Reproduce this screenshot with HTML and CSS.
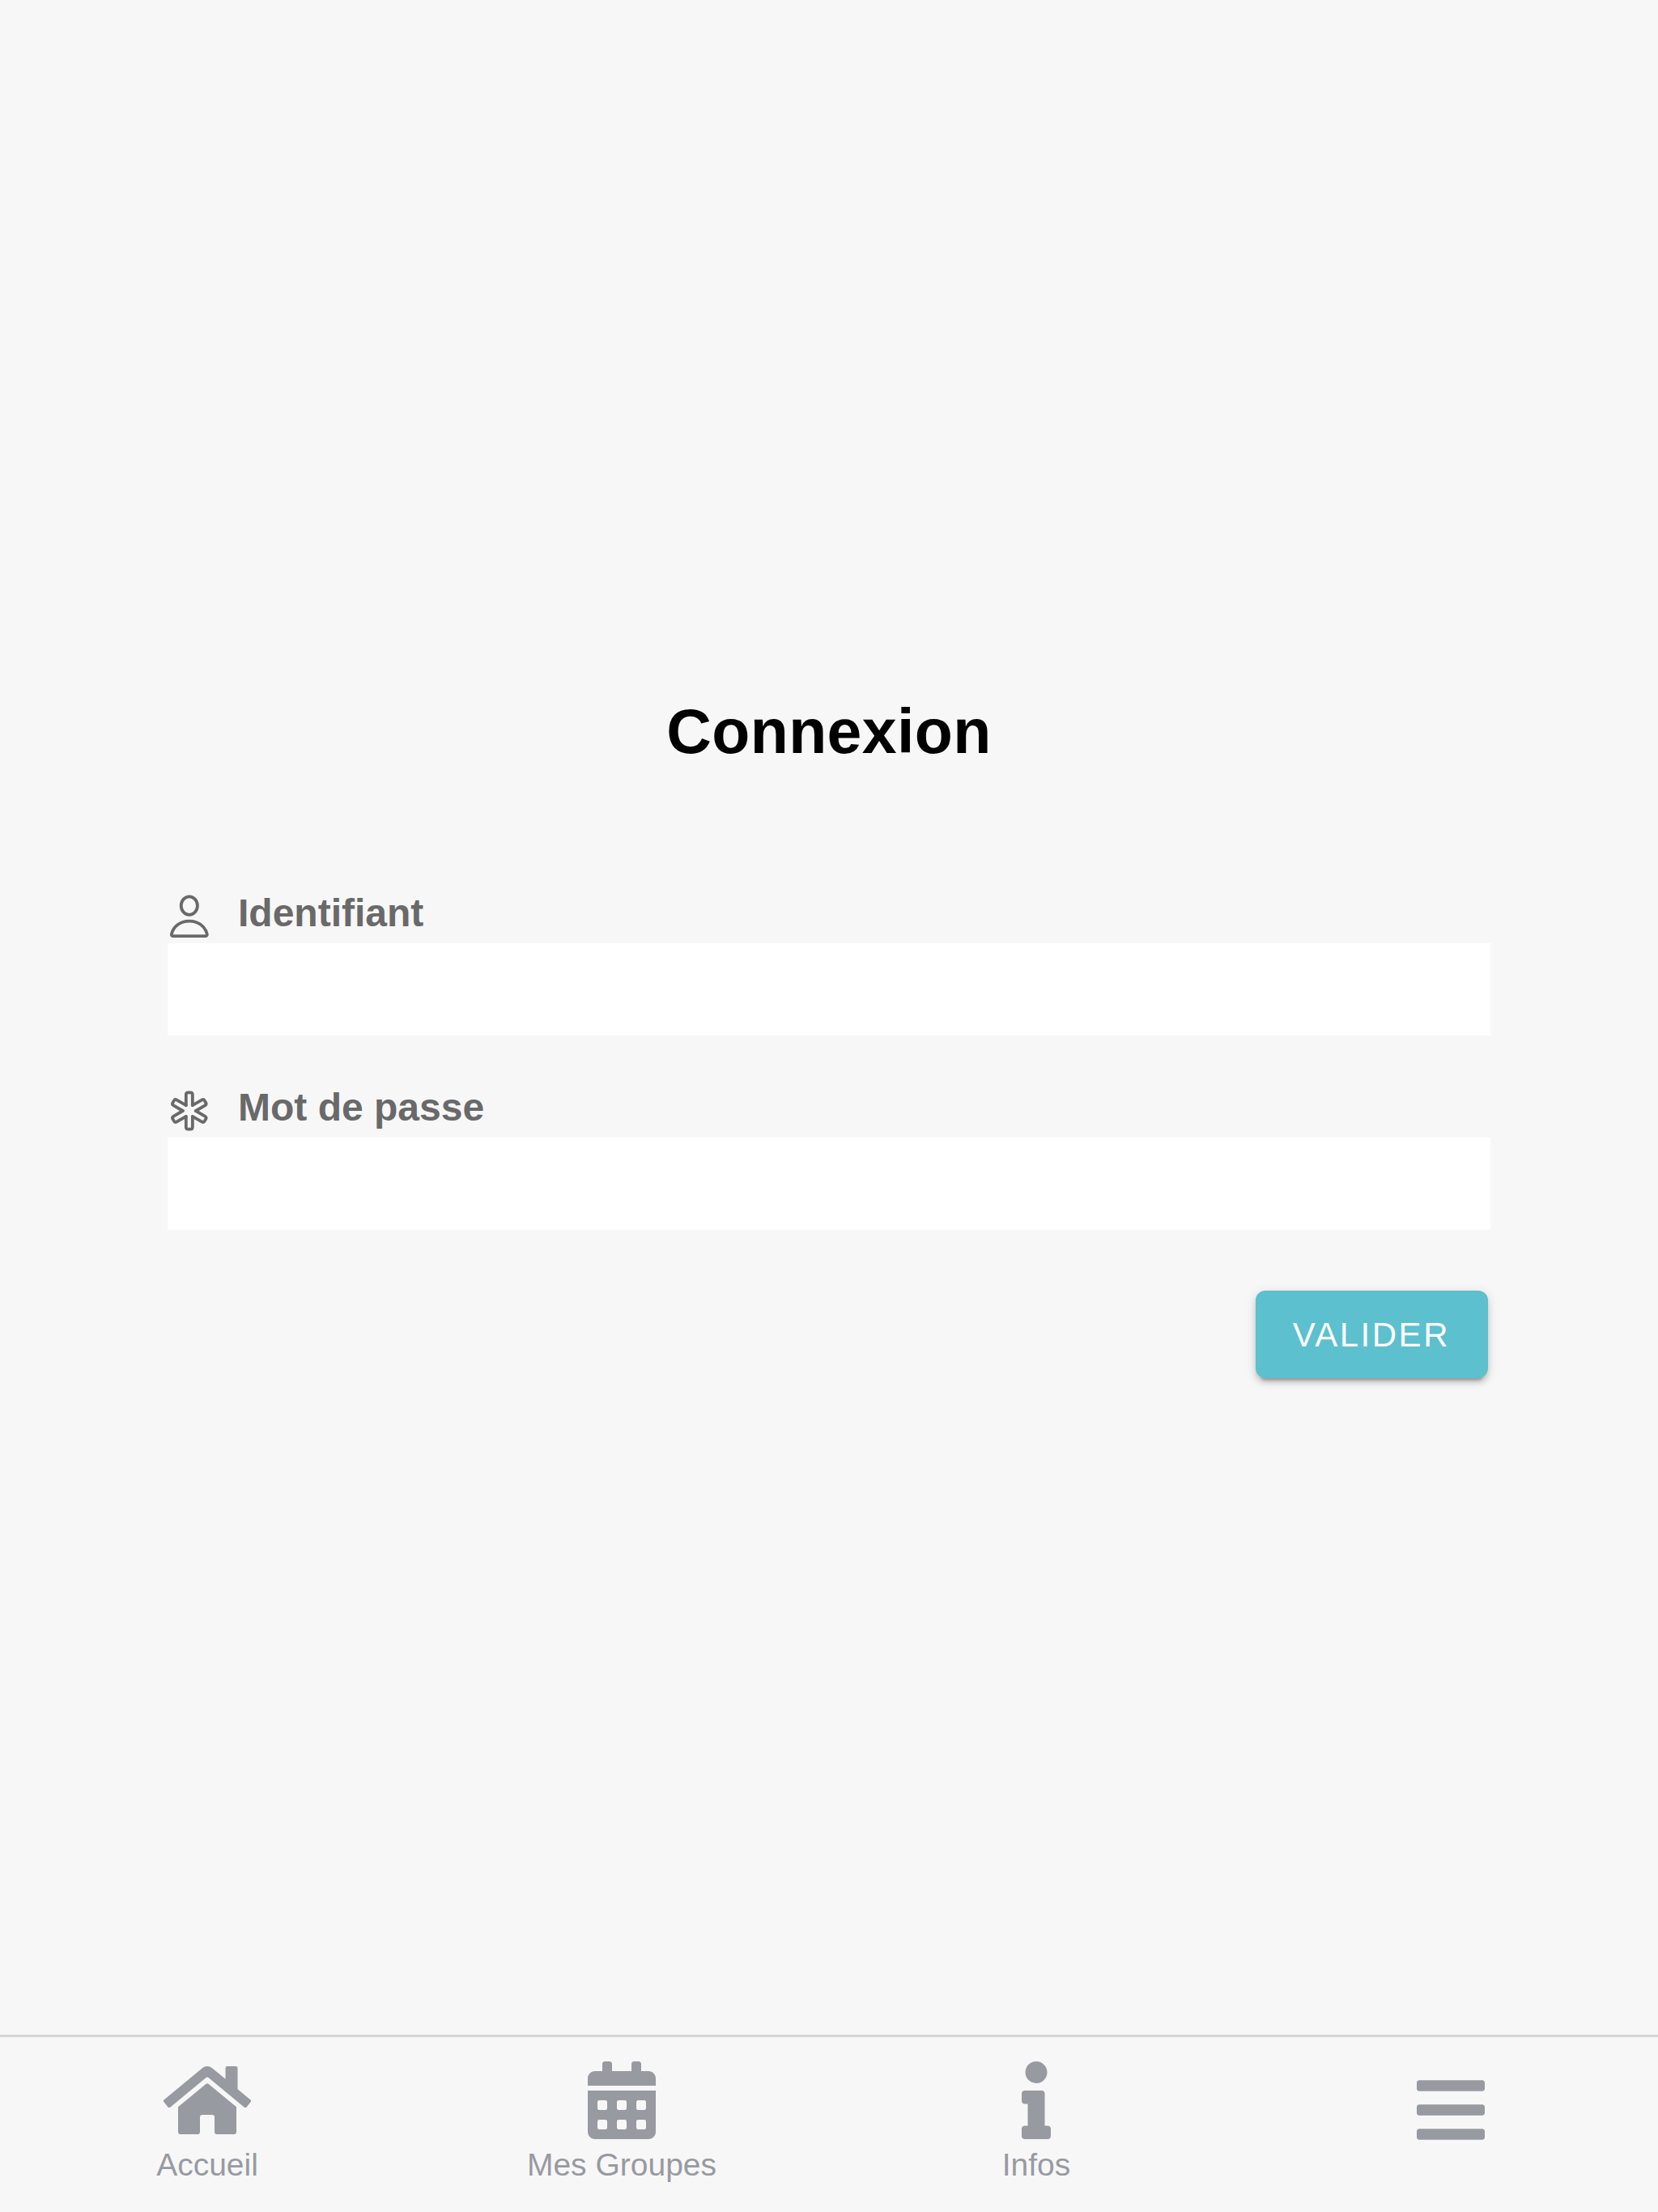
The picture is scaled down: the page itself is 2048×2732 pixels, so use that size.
FILE: index.html
```html
<!DOCTYPE html>
<html lang="fr">
  <head>
    <meta charset="utf-8" />
    <meta name="viewport" content="width=device-width, initial-scale=1" />
    <title>Connexion</title>

    <!-- CSS -->
    <link rel="stylesheet" href="styles.css">
  </head>

  <body>
    <main class="content">
      <h1 class="title">Connexion</h1>

      <form class="login-form">
        <div class="field">
          <label class="field-label" for="login">
            <svg class="field-icon" viewBox="0 0 60 60">
              <ellipse cx="29.8" cy="16.6" rx="10.1" ry="11.3" />
              <path d="M29.8 35.6C18.8 35.6 10.3 42 8 51.3C7.5 53.2 8.4 54.2 9.9 54.2H49.7C51.2 54.2 52.1 53.2 51.6 51.3C49.3 42 40.8 35.6 29.8 35.6Z" />
            </svg>
            Identifiant
          </label>
          <input class="field-input" id="login" type="text" />
        </div>

        <div class="field">
          <label class="field-label" for="password">
            <svg class="field-icon" viewBox="0 0 60 60">
              <!-- one branch of the star, turned six times -->
              <defs>
                <path id="branch" d="M-4 -6.93V-20Q-4 -22.7 -1.5 -22.7H1.5Q4 -22.7 4 -20V-6.93" />
              </defs>
              <g transform="translate(29.8 30)">
                <use href="#branch" />
                <use href="#branch" transform="rotate(60)" />
                <use href="#branch" transform="rotate(120)" />
                <use href="#branch" transform="rotate(180)" />
                <use href="#branch" transform="rotate(240)" />
                <use href="#branch" transform="rotate(300)" />
              </g>
            </svg>
            Mot de passe
          </label>
          <input class="field-input" id="password" type="password" />
        </div>

        <button class="submit-button" type="button">Valider</button>
      </form>
    </main>

    <!-- Bottom tabs -->
    <nav class="tab-bar">
      <a class="tab">
        <svg class="tab-icon" viewBox="0 0 576 512"><path d="M280.37 148.26L96 300.11V464a16 16 0 0 0 16 16l112.06-.29a16 16 0 0 0 15.92-16V368a16 16 0 0 1 16-16h64a16 16 0 0 1 16 16v95.64a16 16 0 0 0 16 16.05L464 480a16 16 0 0 0 16-16V300L295.67 148.26a12.19 12.19 0 0 0-15.3 0zM571.6 251.47L488 182.56V44.05a12 12 0 0 0-12-12h-56a12 12 0 0 0-12 12v72.61L318.47 43a48 48 0 0 0-61 0L4.34 251.47a12 12 0 0 0-1.6 16.9l25.5 31A12 12 0 0 0 45.15 301l235.22-193.74a12.19 12.19 0 0 1 15.3 0L530.9 301a12 12 0 0 0 16.9-1.6l25.5-31a12 12 0 0 0-1.7-16.93z" /></svg>
        <span>Accueil</span>
      </a>
      <a class="tab">
        <svg class="tab-icon" viewBox="0 0 448 512"><path fill-rule="evenodd" d="M0 464c0 26.5 21.5 48 48 48h352c26.5 0 48-21.5 48-48V192H0v272zM76 256h40a12 12 0 0 1 12 12v40a12 12 0 0 1-12 12H76a12 12 0 0 1-12-12v-40a12 12 0 0 1 12-12zM204 256h40a12 12 0 0 1 12 12v40a12 12 0 0 1-12 12h-40a12 12 0 0 1-12-12v-40a12 12 0 0 1 12-12zM332 256h40a12 12 0 0 1 12 12v40a12 12 0 0 1-12 12h-40a12 12 0 0 1-12-12v-40a12 12 0 0 1 12-12zM76 384h40a12 12 0 0 1 12 12v40a12 12 0 0 1-12 12H76a12 12 0 0 1-12-12v-40a12 12 0 0 1 12-12zM204 384h40a12 12 0 0 1 12 12v40a12 12 0 0 1-12 12h-40a12 12 0 0 1-12-12v-40a12 12 0 0 1 12-12zM332 384h40a12 12 0 0 1 12 12v40a12 12 0 0 1-12 12h-40a12 12 0 0 1-12-12v-40a12 12 0 0 1 12-12zM400 64h-48V16c0-8.8-7.2-16-16-16h-32c-8.8 0-16 7.2-16 16v48H160V16c0-8.8-7.2-16-16-16h-32c-8.8 0-16 7.2-16 16v48H48C21.5 64 0 85.5 0 112v48h448v-48c0-26.5-21.5-48-48-48z" /></svg>
        <span>Mes Groupes</span>
      </a>
      <a class="tab">
        <svg class="tab-icon" viewBox="0 0 192 512"><path d="M20 424.229h20V279.771H20c-11.046 0-20-8.954-20-20V212c0-11.046 8.954-20 20-20h112c11.046 0 20 8.954 20 20v212.229h20c11.046 0 20 8.954 20 20V492c0 11.046-8.954 20-20 20H20c-11.046 0-20-8.954-20-20v-47.771c0-11.046 8.954-20 20-20zM96 0C56.235 0 24 32.235 24 72s32.235 72 72 72 72-32.235 72-72S135.764 0 96 0z" /></svg>
        <span>Infos</span>
      </a>
      <a class="tab tab-menu">
        <svg class="tab-icon" viewBox="0 0 448 512"><path d="M16 132h416c8.837 0 16-7.163 16-16V76c0-8.837-7.163-16-16-16H16C7.163 60 0 67.163 0 76v40c0 8.837 7.163 16 16 16zm0 160h416c8.837 0 16-7.163 16-16v-40c0-8.837-7.163-16-16-16H16c-8.837 0-16 7.163-16 16v40c0 8.837 7.163 16 16 16zm0 160h416c8.837 0 16-7.163 16-16v-40c0-8.837-7.163-16-16-16H16c-8.837 0-16 7.163-16 16v40c0 8.837 7.163 16 16 16z" /></svg>
      </a>
    </nav>
  </body>
</html>
```
FILE: styles.css
```css
* {
  box-sizing: border-box;
}

body {
  display: flex;
  flex-direction: column;
  height: 100vh;
  margin: 0;
  font-family: "Liberation Sans", Arial, sans-serif;
  background-color: #f7f7f7;
  color: black;
}

.content {
  flex: 1;
  padding: 858px 207px 0;
}

.title {
  margin: 0 0 152px;
  font-size: 77px;
  line-height: 91px;
  letter-spacing: 0.4px;
  text-align: center;
}

.login-form {
  display: flex;
  flex-direction: column;
  padding-top: 1px;
}

.field {
  margin-bottom: 63px;
}

.field-label {
  display: flex;
  gap: 30px;
  height: 63px;
  padding-left: 54px;
  margin-left: -57px;
  font-size: 48px;
  font-weight: bold;
  line-height: 51px;
  color: #696969;
}

.field-icon {
  width: 60px;
  height: 60px;
  fill: none;
  stroke: #696969;
  stroke-width: 3.8;
  stroke-linecap: round;
  stroke-linejoin: round;
}

.field-input {
  display: block;
  width: 100%;
  height: 114px;
  padding: 0 16px;
  border: 0;
  font-size: 32px;
  background-color: white;
}

.submit-button {
  align-self: flex-end;
  height: 108px;
  margin: 12px 3px 0 0;
  padding: 2px 47px 0 46px;
  border: 0;
  border-radius: 12px;
  font-family: inherit;
  font-size: 42px;
  letter-spacing: 0.06em;
  text-transform: uppercase;
  color: white;
  background-color: #5cc0ce;
  box-shadow: 0 9px 3px -6px rgba(0, 0, 0, 0.2), 0 6px 6px 0 rgba(0, 0, 0, 0.14), 0 3px 15px 0 rgba(0, 0, 0, 0.12);
}

.tab-bar {
  display: flex;
  height: 219px;
  border-top: 3px solid #d5d5d9;
}

.tab {
  display: flex;
  flex: 1;
  flex-direction: column;
  align-items: center;
  padding-top: 30px;
  font-size: 39px;
  line-height: 44px;
  color: #989aa2;
}

.tab-icon {
  height: 96px;
  margin-bottom: 10px;
  fill: #989aa2;
}

/* the menu tab has no text */
.tab-menu {
  padding-top: 42px;
}
```
